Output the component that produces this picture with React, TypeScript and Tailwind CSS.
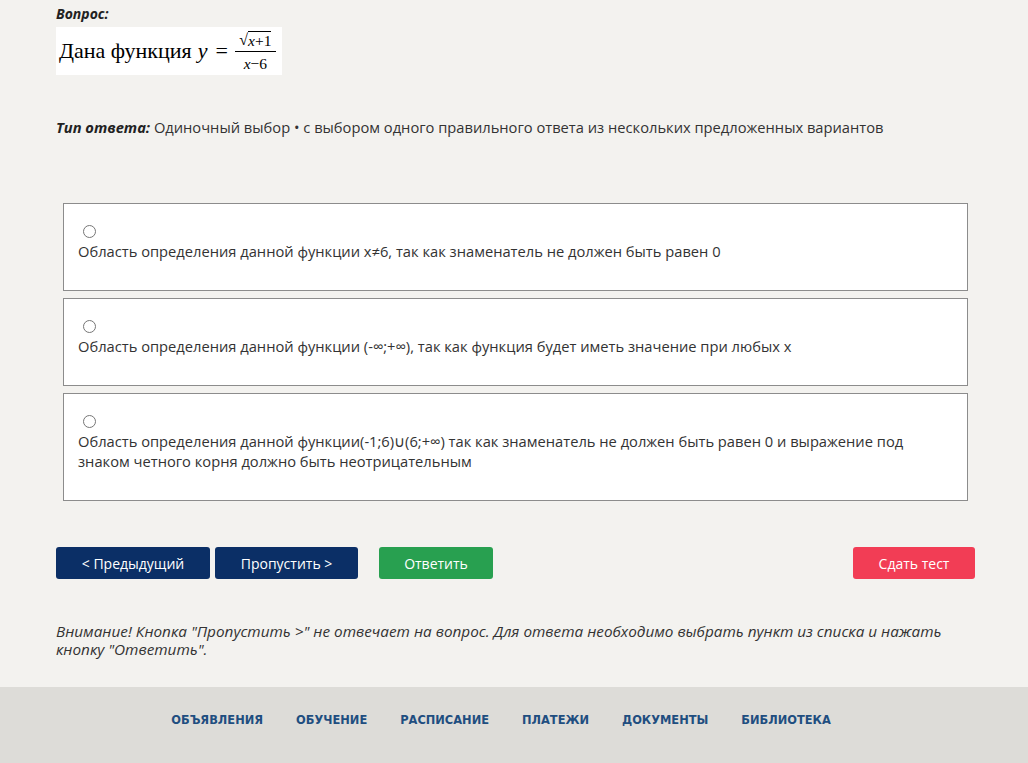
import React from "react";

const options = [
  "Область определения данной функции x≠6, так как знаменатель не должен быть равен 0",
  "Область определения данной функции (-∞;+∞), так как функция будет иметь значение при любых x",
  "Область определения данной функции(-1;6)∪(6;+∞) так как знаменатель не должен быть равен 0 и выражение под знаком четного корня должно быть неотрицательным",
];

const nav = ["ОБЪЯВЛЕНИЯ", "ОБУЧЕНИЕ", "РАСПИСАНИЕ", "ПЛАТЕЖИ", "ДОКУМЕНТЫ", "БИБЛИОТЕКА"];

export default function App() {
  return (
    <div
      className="min-h-screen flex flex-col bg-[#f3f2ef] text-[#333333]"
      style={{ fontFamily: '"Open Sans", "Noto Sans", sans-serif' }}
    >
      <main className="flex-1 pl-[56px] pr-[53px] pt-[4px]">
        <div className="text-[14px] leading-[20px] font-bold italic text-[#222]">Вопрос:</div>
        <div className="mt-[3px] inline-flex items-center bg-white h-[48px] w-[226px] pl-[3px]"
          style={{ fontFamily: '"Liberation Serif", "DejaVu Serif", serif' }}>
          <span className="text-[22px] text-black leading-none">Дана функция</span>
          <span className="text-[22px] text-black italic leading-none ml-[6px]">y</span>
          <span className="text-[22px] text-black leading-none ml-[8px]">=</span>
          <span className="inline-flex flex-col items-center ml-[7px] text-black text-[15.5px] leading-none">
            <span className="flex items-end pb-[3px]">
              <span className="text-[16px] leading-none">√</span>
              <span className="border-t border-black italic pt-[1px]">x<span className="not-italic">+1</span></span>
            </span>
            <span className="border-t border-black w-[41px] text-center pt-[4px]">
              <span className="italic">x</span>−6
            </span>
          </span>
        </div>

        <div className="mt-[42px] text-[14.7px] leading-[20px]">
          <span className="font-bold italic text-[#222]">Тип ответа:</span>{" "}
          Одиночный выбор • с выбором одного правильного ответа из нескольких предложенных вариантов
        </div>

        <div className="mt-[66px] mx-[7px] flex flex-col gap-[7px]">
          {options.map((o, i) => (
            <label
              key={i}
              className="block bg-white border border-[#8c8c8c] pl-[14px] pr-[40px] pt-[17px] pb-[29px] text-[14.7px] leading-[20px]"
            >
              <span className="flex h-[20px] items-center">
                <span className="ml-[5px] w-[13px] h-[13px] rounded-full border border-[#767676] bg-white" />
              </span>
              <span className="block">{o}</span>
            </label>
          ))}
        </div>

        <div className="mt-[46px] flex items-center text-[14px] text-white">
          <button className="h-[32px] w-[154px] rounded-[3px] bg-[#0b2f66]">&lt; Предыдущий</button>
          <button className="ml-[5px] h-[32px] w-[143px] rounded-[3px] bg-[#0b2f66]">Пропустить &gt;</button>
          <button className="ml-[21px] h-[32px] w-[114px] rounded-[3px] bg-[#28a050]">Ответить</button>
          <button className="ml-auto h-[32px] w-[122px] rounded-[3px] bg-[#f23d55]">Сдать тест</button>
        </div>

        <div className="mt-[43px] text-[15.3px] leading-[18px] italic text-[#333]">
          Внимание! Кнопка "Пропустить &gt;" не отвечает на вопрос. Для ответа необходимо выбрать пункт из списка и нажать
          <br />
          кнопку "Ответить".
        </div>
      </main>
      <footer className="h-[76px] bg-[#dddcd8] flex items-center justify-center pr-[26px] pb-[10px] gap-[33px]">
        {nav.map((n) => (
          <a
            key={n}
            className="text-[12.7px] font-bold text-[#1f4e80]"
            style={{ fontFamily: '"DejaVu Sans Condensed", "DejaVu Sans", sans-serif' }}
          >
            {n}
          </a>
        ))}
      </footer>
    </div>
  );
}
